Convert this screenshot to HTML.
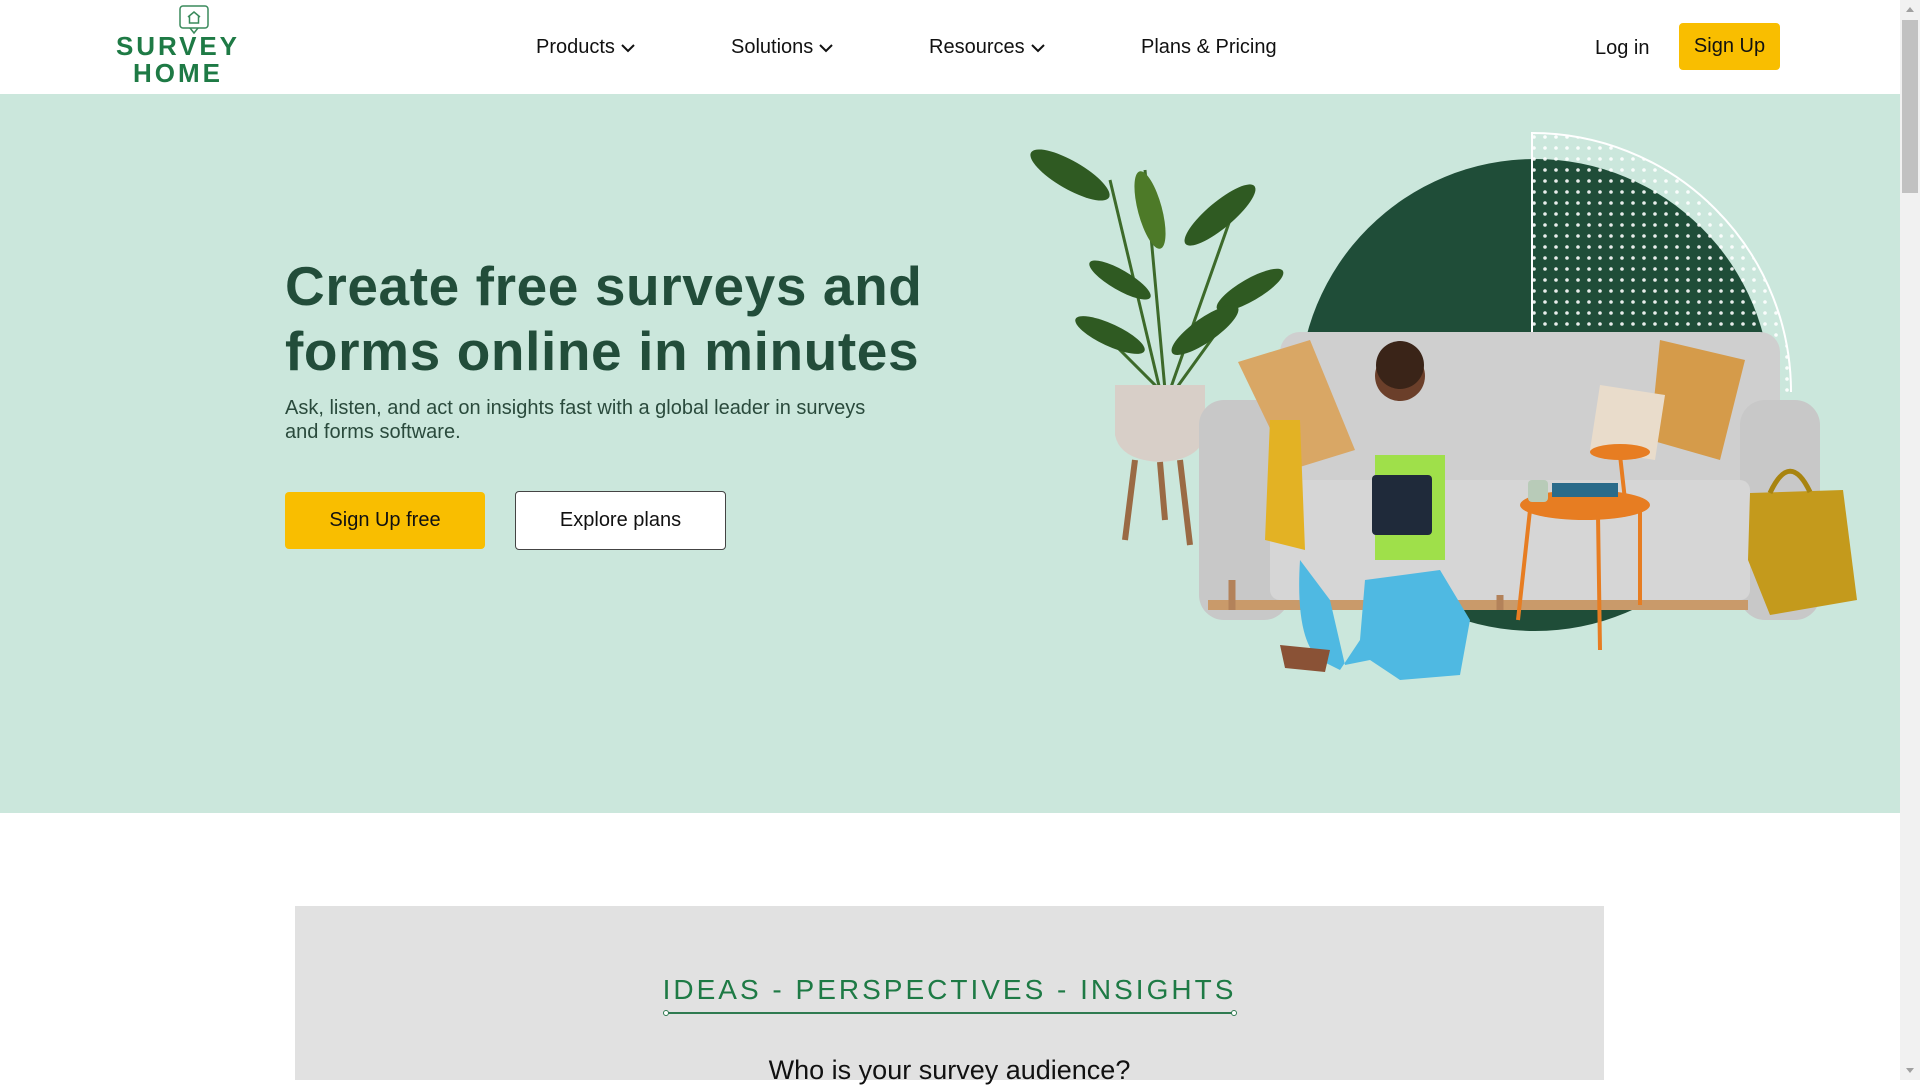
<!DOCTYPE html>
<html><head><meta charset="utf-8"><style>
*{margin:0;padding:0;box-sizing:border-box}
body{width:1920px;height:1080px;overflow:hidden;background:#fff;font-family:"Liberation Sans",Arial,sans-serif;position:relative}
.hdr{position:absolute;left:0;top:0;width:1900px;height:94px;background:#fff}
.nav{position:absolute;top:36px;font-size:20px;color:#111}
.nav svg{vertical-align:middle;margin-left:5px}
.hero{position:absolute;left:0;top:94px;width:1900px;height:719px;background:#cbe7dc}
h1{position:absolute;left:285px;top:254px;font-size:55px;line-height:65px;color:#224d3a;font-weight:bold;width:700px;letter-spacing:0.6px}
.sub{position:absolute;left:285px;top:396px;font-size:20px;line-height:24px;color:#2a4a3c;width:600px}
.btn{position:absolute;font-size:20px;display:flex;align-items:center;justify-content:center;border-radius:4px;color:#111}
.sb{position:absolute;right:0;top:0;width:20px;height:1080px;background:#f1f1f1}
.thumb{position:absolute;right:2px;top:20px;width:16px;height:173px;background:#c1c1c1}
.gray{position:absolute;left:295px;top:906px;width:1309px;height:174px;background:#e1e1e1}
</style></head><body>
<div class="hdr">
 <svg style="position:absolute;left:110px;top:4px" width="140" height="82" viewBox="0 0 140 82">
  <rect x="70" y="2" width="28" height="22" rx="3" fill="none" stroke="#3a8a5c" stroke-width="1.5"/>
  <path d="M80 24 L84 29 L88 24" fill="none" stroke="#3a8a5c" stroke-width="1.5"/>
  <path d="M78 13 L84 8 L90 13 M79.5 12 V19 H88.5 V12" fill="none" stroke="#3a8a5c" stroke-width="1.5"/>
  <text x="6" y="51" font-family="Liberation Sans, sans-serif" font-size="26" font-weight="bold" fill="#1e7a45" letter-spacing="3" textLength="124">SURVEY</text>
  <text x="23" y="78" font-family="Liberation Sans, sans-serif" font-size="26" font-weight="bold" fill="#1e7a45" textLength="87">HOME</text>
 </svg>
 <div class="nav" style="left:536px">Products<svg width="16" height="10"><path d="M2 2l6 6 6-6" fill="none" stroke="#111" stroke-width="2"/></svg></div>
 <div class="nav" style="left:731px">Solutions<svg width="16" height="10"><path d="M2 2l6 6 6-6" fill="none" stroke="#111" stroke-width="2"/></svg></div>
 <div class="nav" style="left:929px">Resources<svg width="16" height="10"><path d="M2 2l6 6 6-6" fill="none" stroke="#111" stroke-width="2"/></svg></div>
 <div class="nav" style="left:1141px">Plans &amp; Pricing</div>
 <div class="nav" style="left:1595px;top:37px">Log in</div>
 <div class="btn" style="left:1679px;top:23px;width:101px;height:47px;background:#f9be00;font-size:20px">Sign Up</div>
</div>
<div class="hero">
 <svg style="position:absolute;left:0;top:0" width="1900" height="719" viewBox="0 94 1900 719">
  <defs><pattern id="d" width="11" height="11" patternUnits="userSpaceOnUse"><circle cx="5" cy="5" r="1.8" fill="#fff"/></pattern>
  <clipPath id="q"><path d="M1532 133 A259 259 0 0 1 1791 392 L1532 392Z"/></clipPath></defs>
  <circle cx="1535" cy="395" r="236" fill="#1f4d38"/>
  <rect x="1532" y="133" width="260" height="260" fill="url(#d)" clip-path="url(#q)" opacity="0.9"/>
  <path d="M1532 392 V133 A259 259 0 0 1 1791 392" fill="none" stroke="#fff" stroke-width="2"/>
  <g stroke="#3d6a2a" stroke-width="3" fill="none"><path d="M1160 390 L1110 180 M1165 390 L1145 170 M1170 390 L1230 220 M1175 390 L1240 300 M1160 390 L1100 330"/></g>
  <g fill="#2f5a22">
   <ellipse cx="1070" cy="175" rx="45" ry="14" transform="rotate(30 1070 175)"/>
   <ellipse cx="1150" cy="210" rx="40" ry="12" transform="rotate(75 1150 210)" fill="#4d7a28"/>
   <ellipse cx="1220" cy="215" rx="45" ry="13" transform="rotate(-40 1220 215)"/>
   <ellipse cx="1250" cy="290" rx="38" ry="11" transform="rotate(-30 1250 290)"/>
   <ellipse cx="1110" cy="335" rx="38" ry="11" transform="rotate(25 1110 335)"/>
   <ellipse cx="1205" cy="330" rx="40" ry="12" transform="rotate(-35 1205 330)"/>
   <ellipse cx="1120" cy="280" rx="35" ry="10" transform="rotate(30 1120 280)"/>
  </g>
  <path d="M1115 385 H1205 V435 Q1200 460 1160 462 Q1120 460 1115 435Z" fill="#d8cfc8"/>
  <g stroke="#9a6a44" stroke-width="6"><path d="M1135 460 L1125 540 M1180 460 L1190 545 M1160 462 L1165 520"/></g>
  <rect x="1280" y="332" width="500" height="170" rx="20" fill="#cfcfcf"/>
  <rect x="1199" y="400" width="90" height="220" rx="25" fill="#c8c8c8"/>
  <rect x="1740" y="400" width="80" height="220" rx="25" fill="#c8c8c8"/>
  <rect x="1270" y="480" width="480" height="120" rx="10" fill="#d6d6d6"/>
  <rect x="1208" y="600" width="540" height="10" fill="#c99a6a"/>
  <path d="M1232 610 V580 M1500 610 V595" stroke="#b3825a" stroke-width="7"/>
  <path d="M1238 362 L1310 340 L1355 450 L1290 470Z" fill="#d9a765"/>
  <path d="M1660 340 L1745 360 L1720 460 L1650 440Z" fill="#d59b4a"/>
  <path d="M1600 385 L1665 395 L1655 460 L1590 450Z" fill="#e9dccb"/>
  <path d="M1270 420 L1300 420 L1305 550 L1265 540Z" fill="#e3b224"/>
  <circle cx="1400" cy="376" r="25" fill="#6b3f2a"/>
  <circle cx="1400" cy="365" r="24" fill="#3a2418"/>
  <path d="M1375 455 L1445 455 L1445 560 L1375 560Z" fill="#9fe04a"/>
  <path d="M1300 560 Q1295 640 1320 660 L1340 670 L1360 640 L1365 580 L1440 570 L1470 620 L1460 675 L1400 680 L1370 660 L1345 665 L1330 600Z" fill="#4fb9e2"/>
  <rect x="1372" y="475" width="60" height="60" rx="4" fill="#1f2a3a"/>
  <path d="M1280 645 L1330 650 L1325 672 L1285 668Z" fill="#8a5236"/>
  <ellipse cx="1585" cy="505" rx="65" ry="15" fill="#e77d22"/>
  <ellipse cx="1620" cy="452" rx="30" ry="8" fill="#e77d22"/>
  <g stroke="#e77d22" stroke-width="4"><path d="M1530 510 L1518 620 M1640 510 L1640 605 M1598 515 L1600 650 M1620 455 L1625 500"/></g>
  <rect x="1552" y="483" width="66" height="14" fill="#2a6b8a"/>
  <rect x="1528" y="480" width="20" height="22" rx="4" fill="#b8cbb8"/>
  <path d="M1750 493 L1843 490 L1857 600 L1770 615 L1748 560Z" fill="#c49a1c"/>
  <path d="M1770 493 Q1790 450 1810 492" fill="none" stroke="#a8840f" stroke-width="5"/>
 </svg>
 <h1 style="top:160px">Create free surveys and forms online in minutes</h1>
 <div class="sub" style="top:302px">Ask, listen, and act on insights fast with a global leader in surveys and forms software.</div>
 <div class="btn" style="left:285px;top:398px;width:200px;height:57px;background:#f9be00">Sign Up free</div>
 <div class="btn" style="left:515px;top:397px;width:211px;height:59px;background:#fff;border:1.5px solid #444">Explore plans</div>
</div>
<div class="gray">
 <div style="position:absolute;left:0;width:1309px;top:68px;text-align:center;font-size:28px;letter-spacing:3px;color:#1e7a45">IDEAS - PERSPECTIVES - INSIGHTS</div>
 <svg style="position:absolute;left:368px;top:102px" width="574" height="10"><line x1="3" y1="5" x2="571" y2="5" stroke="#2f7a50" stroke-width="2"/><circle cx="3" cy="5" r="2.5" fill="#fff" stroke="#2f7a50"/><circle cx="571" cy="5" r="2.5" fill="#fff" stroke="#2f7a50"/></svg>
 <div style="position:absolute;left:0;width:1309px;top:149px;text-align:center;font-size:27px;color:#111">Who is your survey audience?</div>
</div>
<div class="sb"><div class="thumb"></div>
 <svg style="position:absolute;left:5px;top:5px" width="10" height="8"><path d="M1 7L5 2L9 7Z" fill="#a0a0a0"/></svg>
 <svg style="position:absolute;left:5px;top:1067px" width="10" height="8"><path d="M1 1L5 6L9 1Z" fill="#a0a0a0"/></svg>
</div>
</body></html>
